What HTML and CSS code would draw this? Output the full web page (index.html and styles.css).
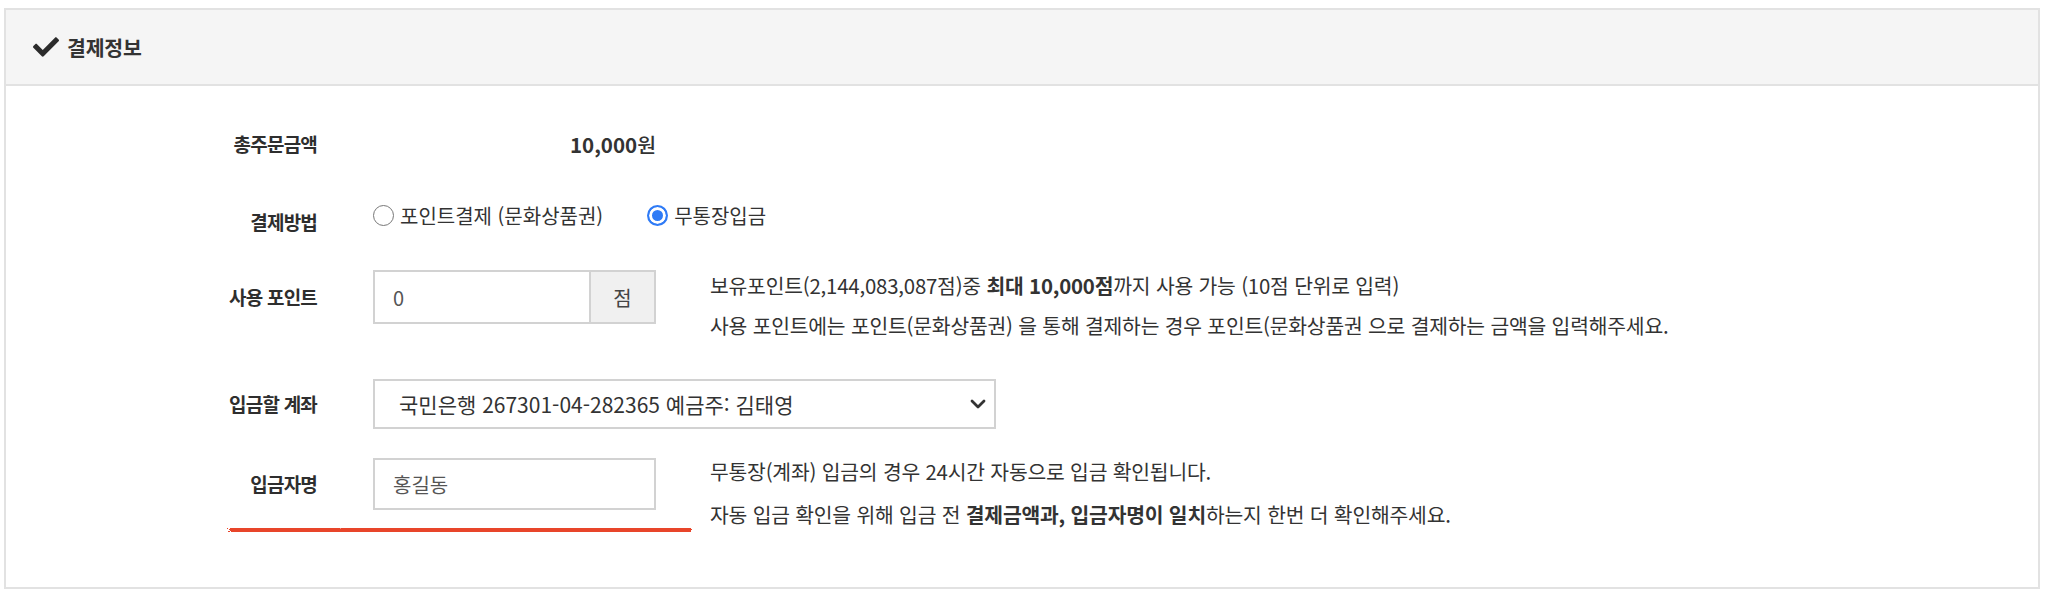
FILE: index.html
```html
<!DOCTYPE html>
<html lang="ko">
<head>
    <meta charset="UTF-8">
    <title>결제정보</title>
    <link rel="stylesheet" href="styles.css">
</head>
<body>
    <section class="panel">
        <div class="panel-head">
            <svg class="ico-check" viewBox="0 64 512 384" width="26" height="20">
                <path d="M173.9 439.4l-166.4-166.4c-10-10-10-26.2 0-36.2l36.2-36.2c10-10 26.2-10 36.2 0L192 312.7 432.1 72.6c10-10 26.2-10 36.2 0l36.2 36.2c10 10 10 26.2 0 36.2l-294.4 294.4c-10 10-26.2 10-36.2 0z"/>
            </svg>
            <h2>결제정보</h2>
        </div>
        <div class="panel-body">
            <div class="row row-total">
                <div class="label">총주문금액</div>
                <div class="field total"><b>10,000</b>원</div>
            </div>
            <div class="row row-method">
                <div class="label">결제방법</div>
                <div class="field radios">
                    <label class="radio"><input type="radio" name="pay"> 포인트결제 (문화상품권)</label>
                    <label class="radio"><input type="radio" name="pay" checked> 무통장입금</label>
                </div>
            </div>
            <div class="row row-point">
                <div class="label">사용 포인트</div>
                <div class="field">
                    <div class="input-group">
                        <input type="text" class="input" value="0">
                        <span class="addon">점</span>
                    </div>
                </div>
                <div class="help">
                    <p>보유포인트(2,144,083,087점)중 <b>최대 10,000점</b>까지 사용 가능 (10점 단위로 입력)</p>
                    <p>사용 포인트에는 포인트(문화상품권) 을 통해 결제하는 경우 포인트(문화상품권 으로 결제하는 금액을 입력해주세요.</p>
                </div>
            </div>
            <div class="row row-account">
                <div class="label">입금할 계좌</div>
                <div class="field">
                    <div class="select-wrap">
                        <select class="select">
                            <option>국민은행 267301-04-282365 예금주: 김태영</option>
                        </select>
                        <svg class="chev" viewBox="0 0 16 10" width="16" height="10">
                            <path d="M2 2l6 6 6-6" fill="none" stroke="#333" stroke-width="2.8" stroke-linecap="round" stroke-linejoin="round"/>
                        </svg>
                    </div>
                </div>
            </div>
            <div class="row row-name">
                <div class="label">입금자명</div>
                <div class="field">
                    <input type="text" class="input input-name" value="홍길동">
                </div>
                <div class="help">
                    <p>무통장(계좌) 입금의 경우 24시간 자동으로 입금 확인됩니다.</p>
                    <p>자동 입금 확인을 위해 입금 전 <b>결제금액과, 입금자명이 일치</b>하는지 한번 더 확인해주세요.</p>
                </div>
            </div>

            <!-- marker line drawn over the screenshot -->
            <svg class="marker" width="470" height="20" viewBox="0 0 470 20">
                <defs>
                    <filter id="rough" x="-5%" y="-60%" width="110%" height="220%">
                        <feTurbulence type="fractalNoise" baseFrequency="1.2" numOctaves="3" seed="7"/>
                        <feDisplacementMap in="SourceGraphic" scale="7"/>
                    </filter>
                </defs>
                <path d="M4 10.5 L60 10 L120 11 L180 10 L240 10.5 L300 9.5 L360 10.5 L420 10 L466 10.5" fill="none" stroke="#e8442b" stroke-width="9" filter="url(#rough)"/>
            </svg>
        </div>
    </section>
</body>
</html>
```

FILE: styles.css
```css
*{
    margin: 0;
    padding: 0;
    box-sizing: border-box;
}
body{
    margin: 8px 8px 0 4px;
    font-family: "Noto Sans CJK KR", "Noto Sans", sans-serif;
    color: #333;
    background: #fff;
}
.panel{
    height: 581px;
    border: 2px solid #e2e2e2;
}
.panel-head{
    height: 76px;
    background: #f5f5f5;
    border-bottom: 2px solid #e2e2e2;
    display: flex;
    align-items: center;
    padding-left: 27px;
}
.ico-check{
    fill: #2b2b2b;
    margin-right: 8px;
}
.panel-head h2{
    font-size: 20.5px;
    font-weight: 700;
    color: #333;
    letter-spacing: -0.2px;
}
.panel-body{
    position: relative;
    padding-top: 34px;
}
.row{
    display: flex;
    align-items: flex-start;
}
.label{
    width: 311px;
    margin-right: 56px;
    text-align: right;
    font-size: 19px;
    font-weight: 700;
    color: #2e2e2e;
    letter-spacing: -0.8px;
}
.field{
    font-size: 20px;
}
.help{
    margin-left: 54px;
    font-size: 20.4px;
    color: #333;
    letter-spacing: -0.2px;
}
.help b{
    font-weight: 700;
}

/* 총주문금액 */
.row-total{
    height: 48px;
}
.row-total .label{
    line-height: 48px;
}
.total{
    width: 283px;
    text-align: right;
    line-height: 48px;
    font-size: 20.5px;
    font-weight: 500;
}
.total b{
    font-weight: 700;
}

/* 결제방법 */
.row-method{
    margin-top: 24px;
    height: 46px;
}
.row-method .label{
    padding-top: 13px;
    line-height: 34px;
}
.radios{
    display: flex;
    align-items: center;
    height: 46px;
    gap: 44px;
}
.radio{
    display: flex;
    align-items: center;
    font-size: 20px;
    color: #333;
}
.radio input{
    appearance: none;
    -webkit-appearance: none;
    width: 21px;
    height: 21px;
    border: 1.5px solid #777;
    border-radius: 50%;
    background: #fff;
    margin-right: 6px;
}
.radio input:checked{
    border: 2px solid #2f7bf6;
    background: #2f7bf6;
    box-shadow: inset 0 0 0 3px #fff;
}

/* 사용 포인트 */
.row-point{
    margin-top: 27px;
}
.row-point .label{
    margin-top: 5px;
    line-height: 54px;
}
.row-point .field{
    margin-top: 5px;
}
.row-point .help{
    line-height: 40px;
}
.input-group{
    display: flex;
    width: 283px;
    height: 54px;
}
.input{
    height: 54px;
    border: 2px solid #d2d2d2;
    padding: 0 18px;
    font-family: inherit;
    font-size: 20px;
    color: #555;
    outline: none;
    background: #fff;
}
.input-group .input{
    width: 216px;
    border-right: 0;
}
.addon{
    flex: 1;
    display: flex;
    align-items: center;
    justify-content: center;
    background: #f0f0f0;
    border: 2px solid #d2d2d2;
    font-size: 20px;
    color: #444;
}

/* 입금할 계좌 */
.row-account{
    margin-top: 34px;
}
.row-account .label{
    line-height: 50px;
}
.select-wrap{
    position: relative;
    width: 623px;
}
.select{
    appearance: none;
    -webkit-appearance: none;
    width: 623px;
    height: 50px;
    border: 2px solid #d2d2d2;
    background: #fff;
    padding: 0 24px;
    font-family: inherit;
    font-size: 21px;
    color: #333;
    outline: none;
}
.chev{
    position: absolute;
    right: 10px;
    top: 20px;
    pointer-events: none;
}

/* 입금자명 */
.row-name{
    margin-top: 20px;
}
.row-name .label{
    margin-top: 9px;
    line-height: 52px;
}
.row-name .field{
    margin-top: 9px;
}
.input-name{
    width: 283px;
    height: 52px;
}
.row-name .help{
    padding-top: 1px;
    line-height: 43px;
}

.marker{
    position: absolute;
    left: 219px;
    top: 434px;
}
```
